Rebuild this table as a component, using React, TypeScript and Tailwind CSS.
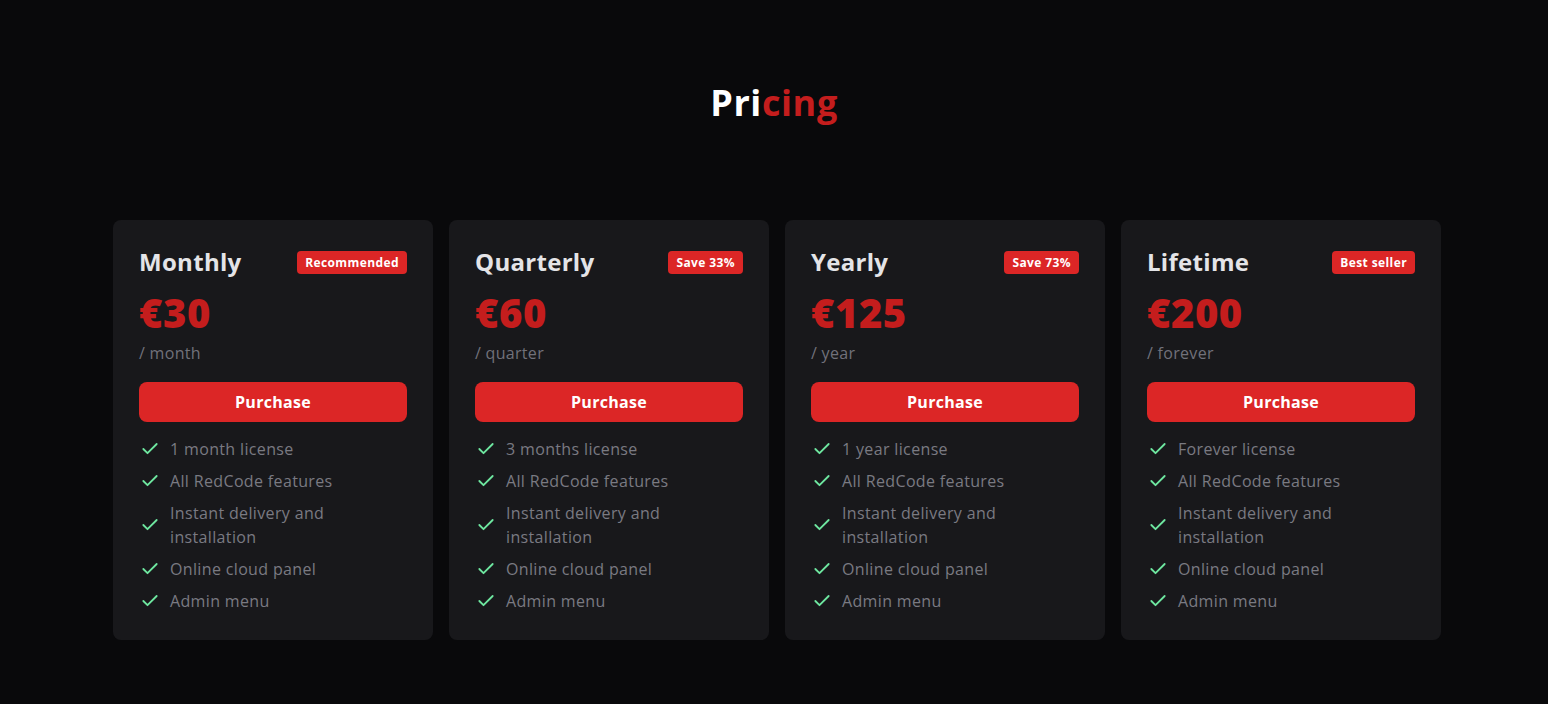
import { Check } from "lucide-react";

type Plan = {
  name: string;
  badge: string;
  price: string;
  period: string;
  features: string[];
};

const plans: Plan[] = [
  {
    name: "Monthly",
    badge: "Recommended",
    price: "€30",
    period: "/ month",
    features: ["1 month license", "All RedCode features", "Instant delivery and installation", "Online cloud panel", "Admin menu"],
  },
  {
    name: "Quarterly",
    badge: "Save 33%",
    price: "€60",
    period: "/ quarter",
    features: ["3 months license", "All RedCode features", "Instant delivery and installation", "Online cloud panel", "Admin menu"],
  },
  {
    name: "Yearly",
    badge: "Save 73%",
    price: "€125",
    period: "/ year",
    features: ["1 year license", "All RedCode features", "Instant delivery and installation", "Online cloud panel", "Admin menu"],
  },
  {
    name: "Lifetime",
    badge: "Best seller",
    price: "€200",
    period: "/ forever",
    features: ["Forever license", "All RedCode features", "Instant delivery and installation", "Online cloud panel", "Admin menu"],
  },
];

function PlanCard({ plan }: { plan: Plan }) {
  return (
    <div className="flex w-[320px] shrink-0 flex-col rounded-lg bg-[#18181b] px-[26px] pb-[27px] pt-[26px]">
      <div className="flex h-8 items-center justify-between">
        <div className="text-[24px] font-bold leading-8 tracking-[0.3px] text-[#e4e4e7]">{plan.name}</div>
        <span className="rounded-[4px] bg-[#dc2626] px-2 py-[4px] text-[12px] font-bold leading-[15px] tracking-[0.4px] text-white">
          {plan.badge}
        </span>
      </div>
      <div className="mt-[11px] text-[40px] font-extrabold leading-[48px] tracking-[0.5px] text-[#c41d1d]">{plan.price}</div>
      <div className="mt-1 text-[16px] leading-6 tracking-[0.3px] text-[#71717a]">{plan.period}</div>
      <button className="mt-[17px] h-[40px] w-full rounded-lg bg-[#dc2626] text-[16px] font-bold tracking-[0.3px] text-white">
        Purchase
      </button>
      <ul className="mt-[15px] flex flex-col gap-2">
        {plan.features.map((f) => (
          <li key={f} className="flex items-center gap-[10px] text-[16px] leading-6 tracking-[0.35px] text-[#7a7a82]">
            <Check className="ml-[1px] h-5 w-5 shrink-0 text-[#6ee7a0]" strokeWidth={2.2} />
            <span className="pr-10">{f}</span>
          </li>
        ))}
      </ul>
    </div>
  );
}

export default function App() {
  return (
    <div
      className="min-h-screen bg-[#09090b]"
      style={{ fontFamily: '"Open Sans", Inter, sans-serif' }}
    >
      <div className="pt-[80px] text-center">
        <h1 className="text-[36px] font-bold leading-[46px] tracking-[0.6px]">
          <span className="text-white">Pri</span>
          <span className="text-[#c41d1d]">cing</span>
        </h1>
      </div>
      <div className="mt-[94px] flex gap-4 pl-[113px]">
        {plans.map((p) => (
          <PlanCard key={p.name} plan={p} />
        ))}
      </div>
    </div>
  );
}
